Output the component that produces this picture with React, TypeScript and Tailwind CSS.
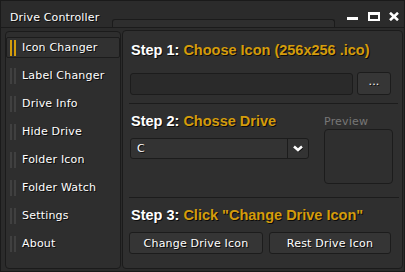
import React from "react";

const menu = [
  "Icon Changer",
  "Label Changer",
  "Drive Info",
  "Hide Drive",
  "Folder Icon",
  "Folder Watch",
  "Settings",
  "About",
];

const shadow = "[text-shadow:1px_1px_0_#0c0c0c]";

function StepTitle({ step, label }: { step: string; label: string }) {
  return (
    <div className={`font-['Liberation_Sans',Arial,sans-serif] font-bold text-[14.5px] leading-[17px] tracking-normal whitespace-nowrap ${shadow}`}>
      <span className="text-white">{step}</span>{" "}
      <span className="text-[#d49c0c]">{label}</span>
    </div>
  );
}

export default function App() {
  return (
    <div className="w-[405px] h-[272px] flex flex-col overflow-hidden bg-[#2b2b2b] border border-[#1a1a1a] text-white font-['DejaVu_Sans',sans-serif] text-[11px] tracking-[0.2px]">
      {/* Title bar */}
      <div className="h-[27px] shrink-0 flex items-start border-b border-[#1b1b1b]">
        <div className={`w-[111px] pl-[9px] mt-[10px] leading-[13px] text-[11px] tracking-[0.15px] ${shadow}`}>
          Drive Controller
        </div>
        <div className="self-end w-[223px] h-[8px] border border-b-0 border-[#1b1b1b] rounded-t-[3px] bg-[#2e2e2e]" />
        <div className="ml-auto mt-[11px] pr-[5px] flex items-start">
          <div className="mt-[5px] w-[11px] h-[3px] bg-white" />
          <div className="ml-[10px] w-[12px] h-[9px] border-white border-t-[3px] border-x-2 border-b-2" />
          <svg className="ml-[9px]" width="10" height="9" viewBox="0 0 10 9">
            <path d="M1 0.8 L9 8.2 M9 0.8 L1 8.2" stroke="white" strokeWidth="2.6" strokeLinecap="butt" />
          </svg>
        </div>
      </div>

      {/* Body */}
      <div className="flex-1 flex gap-[1px] pt-[2px] pl-[4px] pb-[2px]">
        {/* Sidebar */}
        <div className="mt-[1px] w-[117px] flex flex-col gap-[7px] pt-[5px] rounded-[4px] border border-[#1b1b1b] bg-[#2e2e2e]">
          {menu.map((m, i) => {
            const active = i === 0;
            return (
              <div
                key={m}
                className={`h-[21px] flex items-center pl-[3px] ${
                  active ? "border border-[#1c1c1c] bg-[#313131] rounded-[2px]" : "border border-transparent"
                }`}
              >
                <div className="flex gap-[2px]">
                  <div className={`w-[2px] h-[16px] ${active ? "bg-[#d49c0c]" : "bg-[#404040]"}`} />
                  <div className={`w-[2px] h-[16px] ${active ? "bg-[#d49c0c]" : "bg-[#404040]"}`} />
                </div>
                <span className={`ml-[6px] mb-[1px] leading-[13px] ${shadow}`}>{m}</span>
              </div>
            );
          })}
        </div>

        {/* Main panel */}
        <div className="flex-1 mr-[1px] flex flex-col pt-[11px] pl-[7px] pr-[11px] rounded-[4px] border border-[#1b1b1b] bg-[#2f2f2f]">
          <div className="pl-[1px]">
            <StepTitle step="Step 1:" label="Choose Icon (256x256 .ico)" />
          </div>
          <div className="mt-[13px] flex items-start gap-[4px]">
            <div className="flex-1 h-[22px] mt-[1px] rounded-[3px] border border-[#1c1c1c] bg-[#2a2a2a]" />
            <div className={`w-[34px] h-[23px] rounded-[3px] border border-[#1c1c1c] bg-[#363636] flex items-center justify-center pb-[2px] ${shadow}`}>
              ...
            </div>
          </div>
          <div className="mt-[8px] -ml-[1px] -mr-[7px] h-[1px] bg-[#1c1c1c]" />

          <div className="mt-[9px] flex">
            <div className="flex-1 flex flex-col">
              <div className="pl-[1px]">
                <StepTitle step="Step 2:" label="Chosse Drive" />
              </div>
              <div className="mt-[8px] h-[21px] w-[179px] flex rounded-[3px] border border-[#1c1c1c] bg-[#333333]">
                <div className={`flex-1 pl-[6px] flex items-center leading-[13px] ${shadow}`}>C</div>
                <div className="w-[21px] border-l border-[#1c1c1c] flex items-center justify-center">
                  <svg width="10" height="7" viewBox="0 0 10 7">
                    <path d="M1 1.5 L5 5 L9 1.5" fill="none" stroke="#111" strokeWidth="2.6" transform="translate(0.7,0.7)" />
                    <path d="M1 1.5 L5 5 L9 1.5" fill="none" stroke="white" strokeWidth="2.6" />
                  </svg>
                </div>
              </div>
            </div>
            <div className="w-[69px] -mr-[2px] flex flex-col">
              <div className="mt-[2px] leading-[13px] text-[#777777]">Preview</div>
              <div className="mt-[1px] h-[55px] rounded-[4px] border border-[#1c1c1c] bg-[#2f2f2f]" />
            </div>
          </div>
          <div className="mt-[13px] -ml-[1px] -mr-[8px] h-[1px] bg-[#1c1c1c]" />

          <div className="mt-[9px] pl-[1px]">
            <StepTitle step="Step 3:" label={'Click "Change Drive Icon"'} />
          </div>
          <div className="mt-[8px] -ml-[1px] flex gap-[6px]">
            <button className={`w-[134px] h-[22px] rounded-[3px] border border-[#1c1c1c] bg-[#353535] leading-[13px] text-white ${shadow}`}>
              Change Drive Icon
            </button>
            <button className={`w-[122px] h-[22px] rounded-[3px] border border-[#1c1c1c] bg-[#353535] leading-[13px] text-white ${shadow}`}>
              Rest Drive Icon
            </button>
          </div>
        </div>
      </div>
    </div>
  );
}
